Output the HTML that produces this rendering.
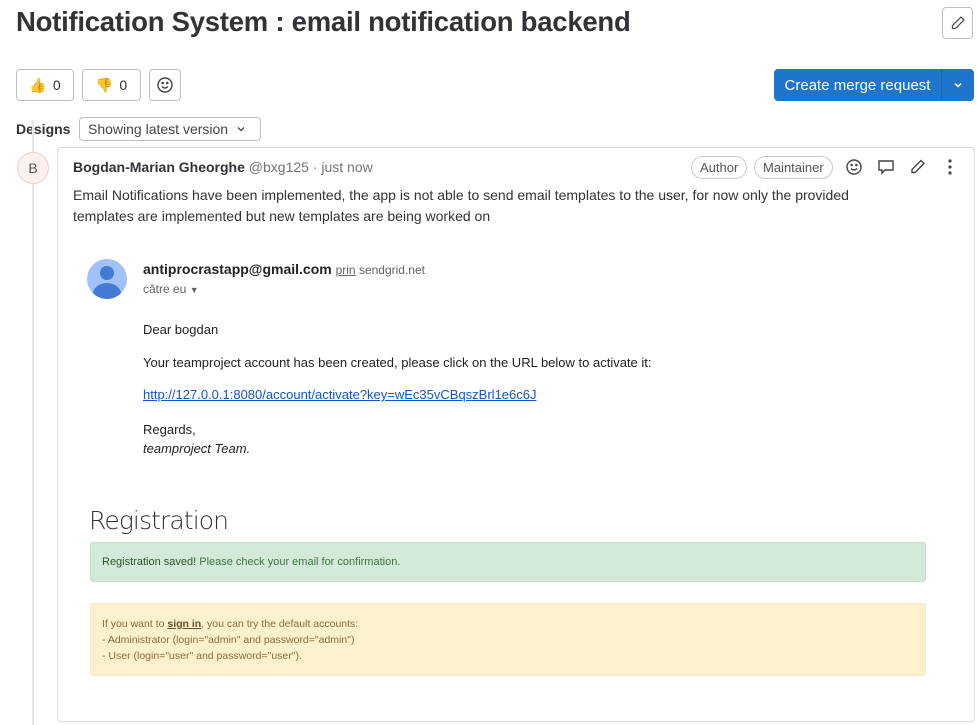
<!DOCTYPE html>
<html><head><meta charset="utf-8"><style>
*{box-sizing:border-box;margin:0;padding:0}
body{width:977px;height:725px;background:#fff;font-family:"Liberation Sans",sans-serif;color:#333238;position:relative;overflow:hidden}
.a{position:absolute}
.btn{position:absolute;border:1px solid #bfbfc3;border-radius:4px;background:#fff;height:32px;display:flex;align-items:center;justify-content:center;font-size:14px;color:#333}
.pill{position:absolute;border:1px solid #ccc;border-radius:12px;height:23px;font-size:13px;color:#555;display:flex;align-items:center;padding:0 8px;top:156px}
.ic{position:absolute;top:158px}
</style></head><body>
<div class="a" style="left:16px;top:6px;font-size:27.5px;font-weight:bold;color:#333238;letter-spacing:-0.25px">Notification System : email notification backend</div>
<div class="btn" style="left:942px;top:7px;width:31px;height:32px"><svg width="16" height="16" viewBox="0 0 16 16" fill="none" stroke="#555" stroke-width="1.3"><path d="M11 2l3 3-8.5 8.5H2.5v-3z"/></svg></div>

<div class="btn" style="left:16px;top:69px;width:58px">👍 <span style="margin-left:6px">0</span></div>
<div class="btn" style="left:82px;top:69px;width:59px">👎 <span style="margin-left:6px">0</span></div>
<div class="btn" style="left:149px;top:69px;width:32px"><svg width="18" height="18" viewBox="0 0 18 18" fill="none" stroke="#444" stroke-width="1.4"><circle cx="9" cy="9" r="7"/><path d="M6 10.5q3 3 6 0"/><circle cx="6.7" cy="7" r=".6" fill="#444"/><circle cx="11.3" cy="7" r=".6" fill="#444"/></svg></div>

<div class="a" style="left:774px;top:69px;width:200px;height:32px;background:#1f75cb;border-radius:4px;color:#fff;font-size:15px;display:flex;align-items:stretch">
<div style="width:168px;border-right:1px solid #1a63ad;display:flex;align-items:center;justify-content:center">Create merge request</div>
<div style="flex:1;display:flex;align-items:center;justify-content:center"><svg width="10" height="10" viewBox="0 0 10 10" fill="none" stroke="#fff" stroke-width="1.5"><path d="M2 3.5l3 3 3-3"/></svg></div></div>

<div class="a" style="left:16px;top:121px;font-size:14px;font-weight:bold">Designs</div>
<div class="btn" style="left:79px;top:117px;width:182px;height:24px;justify-content:flex-start;padding-left:8px;font-size:14px;color:#444">Showing latest version <svg style="margin-left:8px" width="10" height="10" viewBox="0 0 10 10" fill="none" stroke="#444" stroke-width="1.3"><path d="M2 3.5l3 3 3-3"/></svg></div>

<div class="a" style="left:32px;top:120px;width:2px;height:605px;background:#e5e5e8"></div>
<div class="a" style="left:17px;top:152px;width:32px;height:32px;border-radius:50%;background:#fcf1ef;border:1px solid #f0d0cb;font-size:14px;color:#555;display:flex;align-items:center;justify-content:center">B</div>

<div class="a" style="left:57px;top:147px;width:918px;height:575px;border:1px solid #dcdcde;border-radius:4px"></div>
<div class="a" style="left:73px;top:159px;font-size:14px"><b>Bogdan-Marian Gheorghe</b> <span style="color:#737278">@bxg125 · just now</span></div>
<div class="pill" style="left:691px">Author</div>
<div class="pill" style="left:754px">Maintainer</div>
<svg class="ic" style="left:845px" width="18" height="18" viewBox="0 0 18 18" fill="none" stroke="#444" stroke-width="1.4"><circle cx="9" cy="9" r="7"/><path d="M6 10.5q3 3 6 0"/><circle cx="6.7" cy="7" r=".6" fill="#444"/><circle cx="11.3" cy="7" r=".6" fill="#444"/></svg>
<svg class="ic" style="left:877px" width="18" height="18" viewBox="0 0 18 18" fill="none" stroke="#444" stroke-width="1.4"><path d="M2 3h14v9H8l-3 3v-3H2z"/></svg>
<svg class="ic" style="left:909px" width="18" height="18" viewBox="0 0 18 18" fill="none" stroke="#444" stroke-width="1.4"><path d="M12 2.5l3 3L6 14.5H3v-3z"/></svg>
<svg class="ic" style="left:941px" width="18" height="18" viewBox="0 0 18 18" fill="#444"><circle cx="9" cy="3" r="1.6"/><circle cx="9" cy="9" r="1.6"/><circle cx="9" cy="15" r="1.6"/></svg>

<div class="a" style="left:73px;top:185px;width:830px;font-size:14px;line-height:21px;color:#333238">Email Notifications have been implemented, the app is not able to send email templates to the user, for now only the provided templates are implemented but new templates are being worked on</div>

<div class="a" style="left:87px;top:259px;width:40px;height:40px;border-radius:50%;background:#a0c2f9;overflow:hidden">
<div class="a" style="left:13px;top:7px;width:14px;height:14px;border-radius:50%;background:#4479d6"></div>
<div class="a" style="left:6px;top:24px;width:28px;height:22px;border-radius:50%;background:#4479d6"></div></div>
<div class="a" style="left:143px;top:261px;font-size:14px"><b style="color:#222">antiprocrastapp@gmail.com</b> <span style="font-size:12px;color:#5f6368"><u>prin</u> sendgrid.net</span></div>
<div class="a" style="left:143px;top:282px;font-size:12px;color:#5f6368">către eu <span style="font-size:9px">▼</span></div>

<div class="a" style="left:143px;top:322px;font-size:13px;color:#222;line-height:16px">Dear bogdan</div>
<div class="a" style="left:143px;top:355px;font-size:13px;color:#222">Your teamproject account has been created, please click on the URL below to activate it:</div>
<div class="a" style="left:143px;top:387px;font-size:13px;color:#1155cc;text-decoration:underline">http://127.0.0.1:8080/account/activate?key=wEc35vCBqszBrl1e6c6J</div>
<div class="a" style="left:143px;top:420px;font-size:13px;color:#222;line-height:19px">Regards,<br><i>teamproject Team.</i></div>

<div class="a" style="left:89px;top:506px;font-size:25px;font-family:'DejaVu Sans ExtraLight','DejaVu Sans',sans-serif;font-weight:200;color:#333;letter-spacing:-0.9px">Registration</div>
<div class="a" style="left:90px;top:542px;width:836px;height:40px;background:#d4ead9;border:1px solid #c3e0c9;border-radius:3px;font-size:11px;color:#3c763d;padding:13px 0 0 11px"><span style="color:#2b542c">Registration saved!</span> Please check your email for confirmation.</div>
<div class="a" style="left:90px;top:603px;width:836px;height:73px;background:#fdf0cc;border:1px solid #faebcc;border-radius:3px;font-size:10.5px;color:#8a6d3b;padding:12px 0 0 11px;line-height:16px">If you want to <b style="text-decoration:underline;color:#66512c">sign in</b>, you can try the default accounts:<br>- Administrator (login="admin" and password="admin")<br>- User (login="user" and password="user").</div>
</body></html>
